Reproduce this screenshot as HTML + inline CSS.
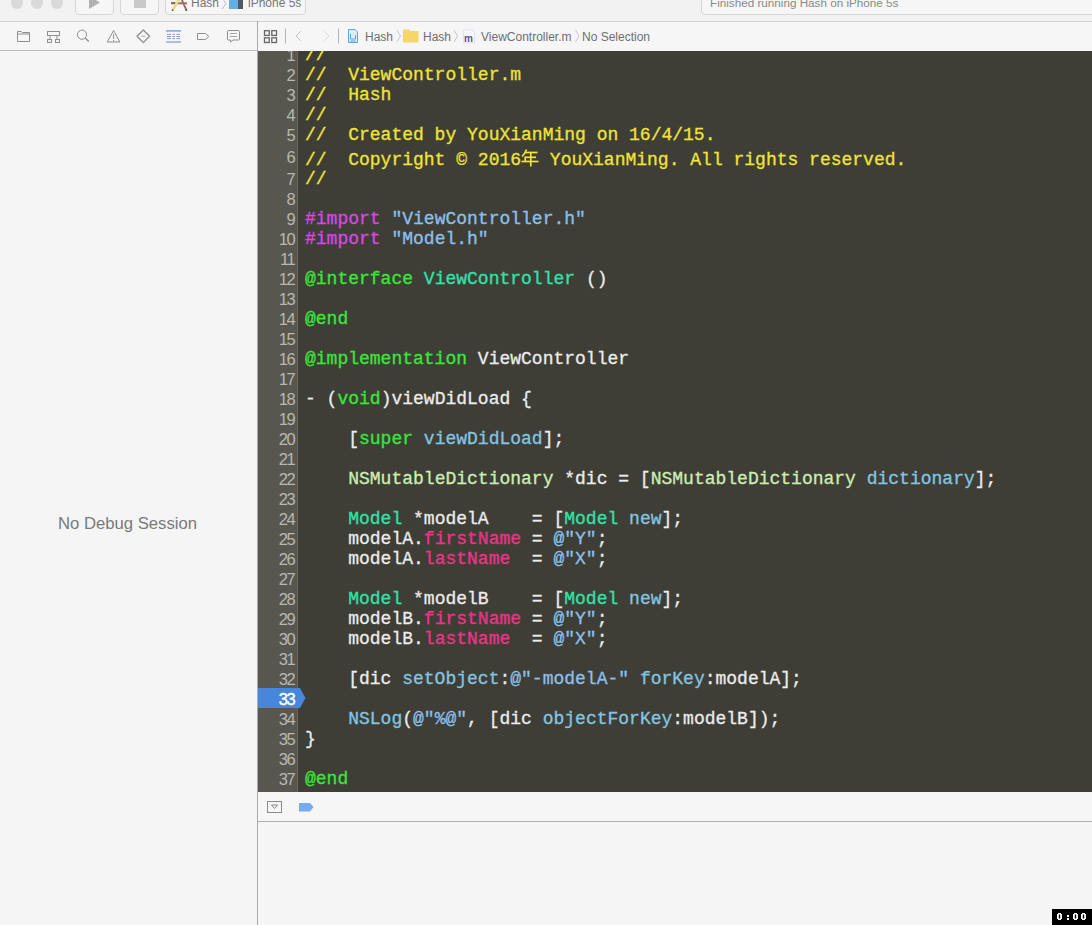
<!DOCTYPE html>
<html><head><meta charset="utf-8">
<style>
*{margin:0;padding:0;box-sizing:border-box}
html,body{width:1092px;height:925px;overflow:hidden;background:#f4f4f4;font-family:"Liberation Sans",sans-serif;position:relative}
.abs{position:absolute}
#toolbar{left:0;top:0;width:1092px;height:21px;background:#f2f2f2}
#tbline{left:0;top:21px;width:1092px;height:1px;background:#d2d2d2}
#navbar{left:0;top:22px;width:257px;height:28px;background:#f6f6f6}
#navline{left:0;top:50px;width:257px;height:1px;background:#bdbdbd}
#vsep{left:257px;top:21px;width:1px;height:904px;background:#aaaaaa}
#jumpbar{left:258px;top:22px;width:834px;height:29px;background:#f6f6f6}
#leftpanel{left:0;top:51px;width:257px;height:874px;background:#f5f5f5}
#nodebug{left:-1px;top:514px;width:257px;text-align:center;font-size:16.7px;line-height:19px;color:#7a7a7a}
#editor{left:258px;top:51px;width:834px;height:741px;background:#3e3e36;overflow:hidden}
#gutter{left:0;top:0;width:39px;height:741px;background:#58574f}
#gline{left:39px;top:0;width:1px;height:741px;background:#66655e}
#code{left:47px;top:-6px;font-family:"Liberation Mono",monospace;font-size:18px;-webkit-text-stroke:0.3px currentColor;color:#ececec}
.ln{height:20px;line-height:20px;white-space:pre}
#nums{left:0;top:-6px;width:36px;text-align:right;font-size:16.5px;color:#b9b8b1;letter-spacing:-1.6px}
#nums div{height:20px;line-height:20px}
#debugbar{left:258px;top:792px;width:834px;height:29px;background:#f6f6f6}
#dbline{left:258px;top:821px;width:834px;height:1px;background:#b0b0b0}
#console{left:258px;top:822px;width:834px;height:103px;background:#f5f5f5}
#stamp{left:1052px;top:909px;width:40px;height:16px;background:#000}
.light{width:12px;height:12px;border-radius:50%;background:#d9d9d9}
.tbtn{top:-6px;height:21px;border:1px solid #d7d7d7;border-radius:4px;background:#f6f6f6}
.tbtxt{top:-4px;font-size:12px;line-height:14px;color:#777;white-space:nowrap}
.jb{top:30px;font-size:12px;line-height:14px;color:#6f6f6f;white-space:nowrap}
.c{color:#f0e436}
.k{color:#38e838}
.pp{color:#dd45e6}
.s{color:#8cc0ee}
.cl{color:#32e2aa}
.m{color:#82c6e2}
.ns{color:#cdeeb0}
.pr{color:#ee338a}
</style></head><body>
<div id="toolbar" class="abs"></div>
<div class="abs light" style="left:11px;top:-3.5px"></div>
<div class="abs light" style="left:31px;top:-3.5px"></div>
<div class="abs light" style="left:51px;top:-3.5px"></div>
<div class="abs tbtn" style="left:75px;width:39px"></div>
<svg class="abs" style="left:88px;top:-4px" width="14" height="14"><path d="M1 0 L12 6.5 L1 13 Z" fill="#b0b0b0"/></svg>
<div class="abs tbtn" style="left:120px;width:39px"></div>
<div class="abs" style="left:134px;top:-4px;width:12px;height:12px;background:#c9c9c9"></div>
<div class="abs tbtn" style="left:165px;width:141px"></div>
<svg class="abs" style="left:165px;top:0px" width="25" height="14"><path d="M16.5 -1 L21.5 10.5" stroke="#a0615a" stroke-width="1.8"/><path d="M6.5 3.3 H22" stroke="#9c7064" stroke-width="2"/><path d="M6 3 H10" stroke="#7d7550" stroke-width="2"/><path d="M14 -1 L8 10" stroke="#eadb8a" stroke-width="2.6"/><circle cx="7.6" cy="10.2" r="0.9" fill="#5a5a70"/><circle cx="21.3" cy="10" r="0.9" fill="#5a5050"/></svg>
<div class="abs tbtxt" style="left:191px;">Hash</div>
<svg class="abs" style="left:221px;top:-2px" width="6" height="12"><path d="M1 0 L5 5.5 L1 11" stroke="#b9b9b9" fill="none"/></svg>
<div class="abs" style="left:229px;top:-2px;width:10px;height:11px;background:#66aee2"></div>
<div class="abs" style="left:238px;top:0px;width:5px;height:9px;background:#4f5a66"></div>
<div class="abs tbtxt" style="left:248px;">iPhone 5s</div>
<div class="abs tbtn" style="left:701px;width:400px"></div>
<div class="abs tbtxt" style="left:710px;color:#8a8a8a;font-size:11.7px">Finished running Hash on iPhone 5s</div>
<div id="tbline" class="abs"></div>
<div id="navbar" class="abs"></div>
<div id="navline" class="abs"></div>
<div id="jumpbar" class="abs"></div>
<svg class="abs" style="left:0;top:22px" width="257" height="28" fill="none" stroke="#8f8f8f" stroke-width="1">
  <!-- folder -->
  <path d="M17.5 9.5 V19.5 H29.5 V10.5 H22.5 L21 9.5 Z M17.5 12 H29.5"/>
  <!-- hierarchy -->
  <rect x="47.5" y="9.5" width="12" height="4"/>
  <path d="M50 13.5 V17.5 M57 13.5 V17.5"/>
  <rect x="47.5" y="17.5" width="4" height="3"/>
  <rect x="55.5" y="17.5" width="4" height="3"/>
  <!-- search -->
  <circle cx="82" cy="12.7" r="4.6"/>
  <path d="M85.3 16 L88.8 19.5" stroke-width="1.3"/>
  <!-- warning -->
  <path d="M113.6 8.5 L119.8 20 H107.2 Z" stroke-linejoin="round"/>
  <path d="M113.6 12 V17 M113.6 18 V19"/>
  <!-- diamond -->
  <path d="M143.3 8 L149.6 14.3 L143.3 20.6 L137 14.3 Z" stroke-linejoin="round" stroke-width="1.3"/>
  <path d="M141.3 14.3 H145.3" stroke-width="0.8"/>
  <!-- debug nav -->
  <path d="M166 8.8 H181 M166 20 H181" stroke="#95ade3" stroke-width="1.7"/>
  <path d="M167 12.3 H171 M172.5 12.3 H175 M176.5 12.3 H180 M167 14.5 H171 M172.5 14.5 H175 M176.5 14.5 H180 M167 16.6 H171 M172.5 16.6 H175 M176.5 16.6 H180" stroke="#7d90bb" stroke-width="0.9"/>
  <!-- tag -->
  <path d="M197.5 11.5 H205.5 L208.8 14.5 L205.5 17.5 H197.5 Z"/>
  <!-- bubble -->
  <path d="M228.5 8.5 H238.5 Q239.5 8.5 239.5 9.5 V17 Q239.5 18 238.5 18 H233 L230.5 20 V18 H228.5 Q227.5 18 227.5 17 V9.5 Q227.5 8.5 228.5 8.5 Z"/>
  <path d="M230 11.5 H237 M230 14.5 H237" stroke-width="0.8"/>
</svg>
<svg class="abs" style="left:258px;top:22px" width="834" height="28" fill="none">
  <g stroke="#666" stroke-width="1.3">
    <rect x="6.5" y="8.7" width="4.7" height="4.7"/>
    <rect x="13.8" y="8.7" width="4.7" height="4.7"/>
    <rect x="6.5" y="15.8" width="4.7" height="4.7"/>
    <rect x="13.8" y="15.8" width="4.7" height="4.7"/>
  </g>
  <path d="M27.5 6.5 V21.5 M80.5 6.5 V21.5" stroke="#b3b3b3"/>
  <path d="M43 9 L38 14 L43 19" stroke="#c4c4c4"/>
  <path d="M66 9 L71 14 L66 19" stroke="#dcdcdc"/>
  <!-- file icon -->
  <path d="M90.5 7.5 H97 L99.5 10 V20.5 H90.5 Z" stroke="#5aa5e3" fill="#dcecfa"/>
  <path d="M92.5 12 V17 H97.5 V13" stroke="#5aa5e3"/>
  <path d="M92.5 19 H97.5" stroke="#5aa5e3"/>
  <!-- chevron -->
  <path d="M139 8 L142.5 14 L139 20" stroke="#c8c8c8"/>
  <!-- folder yellow -->
  <path d="M145 7.5 H151 L152.5 9 H160.5 V20.5 H145 Z" fill="#f4d766"/>
  <path d="M196 8 L199.5 14 L196 20" stroke="#c8c8c8"/>
  <!-- m icon -->
  <path d="M205.5 8 H214 L216.5 10.5 V21 H205.5 Z" stroke="#e2dff0" fill="#fbfaff"/>
  <text x="206" y="19.5" font-family="Liberation Sans" font-size="10" font-weight="bold" fill="#5c4f93">m</text>
  <path d="M317.5 8 L321 14 L317.5 20" stroke="#c8c8c8"/>
</svg>
<div class="abs jb" style="left:365px">Hash</div>
<div class="abs jb" style="left:423px">Hash</div>
<div class="abs jb" style="left:481px">ViewController.m</div>
<div class="abs jb" style="left:582px">No Selection</div>
<div id="leftpanel" class="abs"></div>
<div id="nodebug" class="abs">No Debug Session</div>
<div id="vsep" class="abs"></div>

<div id="editor" class="abs">
  <div id="gutter" class="abs"></div>
  <div id="gline" class="abs"></div>
  <svg class="abs" style="left:0;top:637px" width="50" height="20"><path d="M0 0 H42 L47.5 10 L42 20 H0 Z" fill="#4687dc"/></svg>
  <div id="nums" class="abs">
<div>1</div><div>2</div><div>3</div><div>4</div><div>5</div><div style="height:24px;line-height:24px">6</div><div>7</div><div>8</div><div>9</div><div>10</div><div>11</div><div>12</div><div>13</div><div>14</div><div>15</div><div>16</div><div>17</div><div>18</div><div>19</div><div>20</div><div>21</div><div>22</div><div>23</div><div>24</div><div>25</div><div>26</div><div>27</div><div>28</div><div>29</div><div>30</div><div>31</div><div>32</div><div style="color:#fff;-webkit-text-stroke:0.4px #fff">33</div><div>34</div><div>35</div><div>36</div><div>37</div>
  </div>
  <div id="code" class="abs">
<div class="ln c">//</div>
<div class="ln c">//  ViewController.m</div>
<div class="ln c">//  Hash</div>
<div class="ln c">//</div>
<div class="ln c">//  Created by YouXianMing on 16/4/15.</div>
<div class="ln c" style="height:24px;padding-top:4px">//  Copyright © 2016<svg width="18" height="18" style="vertical-align:-2px" fill="none" stroke="currentColor" stroke-width="1.7" stroke-linecap="butt"><path d="M5.5 0.5 Q4 4.5 1 7.5"/><path d="M4 3.5 H16.5"/><path d="M4.2 8.3 H15"/><path d="M4.2 7.5 V12.5"/><path d="M0.5 12.5 H17.5"/><path d="M9.8 3.5 V17.5"/></svg> YouXianMing. All rights reserved.</div>
<div class="ln c">//</div>
<div class="ln"> </div>
<div class="ln"><span class="pp">#import</span> <span class="s">"ViewController.h"</span></div>
<div class="ln"><span class="pp">#import</span> <span class="s">"Model.h"</span></div>
<div class="ln"> </div>
<div class="ln"><span class="k">@interface</span> <span class="cl">ViewController</span> ()</div>
<div class="ln"> </div>
<div class="ln"><span class="k">@end</span></div>
<div class="ln"> </div>
<div class="ln"><span class="k">@implementation</span> ViewController</div>
<div class="ln"> </div>
<div class="ln">- (<span class="k">void</span>)viewDidLoad {</div>
<div class="ln"> </div>
<div class="ln">    [<span class="k">super</span> <span class="m">viewDidLoad</span>];</div>
<div class="ln"> </div>
<div class="ln">    <span class="ns">NSMutableDictionary</span> *dic = [<span class="ns">NSMutableDictionary</span> <span class="m">dictionary</span>];</div>
<div class="ln"> </div>
<div class="ln">    <span class="cl">Model</span> *modelA    = [<span class="cl">Model</span> <span class="m">new</span>];</div>
<div class="ln">    modelA.<span class="pr">firstName</span> = <span class="s">@"Y"</span>;</div>
<div class="ln">    modelA.<span class="pr">lastName</span>  = <span class="s">@"X"</span>;</div>
<div class="ln"> </div>
<div class="ln">    <span class="cl">Model</span> *modelB    = [<span class="cl">Model</span> <span class="m">new</span>];</div>
<div class="ln">    modelB.<span class="pr">firstName</span> = <span class="s">@"Y"</span>;</div>
<div class="ln">    modelB.<span class="pr">lastName</span>  = <span class="s">@"X"</span>;</div>
<div class="ln"> </div>
<div class="ln">    [dic <span class="m">setObject</span>:<span class="s">@"-modelA-"</span> <span class="m">forKey</span>:modelA];</div>
<div class="ln"> </div>
<div class="ln">    <span class="m">NSLog</span>(<span class="s">@"%@"</span>, [dic <span class="m">objectForKey</span>:modelB]);</div>
<div class="ln">}</div>
<div class="ln"> </div>
<div class="ln"><span class="k">@end</span></div>
  </div>
</div>

<div id="debugbar" class="abs"></div>
<svg class="abs" style="left:258px;top:792px" width="80" height="29" fill="none">
  <rect x="9.5" y="9.5" width="14" height="11" stroke="#8a8a8a"/>
  <path d="M13.5 13 H19.5 L16.5 16.5 Z" stroke="#8a8a8a" stroke-linejoin="round"/>
  <path d="M41 11 H52 L55.5 15 L52 19.5 H41 Z" fill="#77aaf0"/>
</svg>
<div id="dbline" class="abs"></div>
<div id="console" class="abs"></div>
<div id="stamp" class="abs"><svg width="40" height="16"><g fill="#fff">
<path d="M6 4h3v1h1v5h-1v1h-3v-1h-1v-5h1z M6.8 5.5v4h1.4v-4z"/>
<rect x="15" y="6" width="2" height="2"/><rect x="15" y="9" width="2" height="2"/>
<path d="M22 4h3v1h1v5h-1v1h-3v-1h-1v-5h1z M22.8 5.5v4h1.4v-4z"/>
<path d="M30 4h3v1h1v5h-1v1h-3v-1h-1v-5h1z M30.8 5.5v4h1.4v-4z"/>
</g></svg></div>
</body></html>
